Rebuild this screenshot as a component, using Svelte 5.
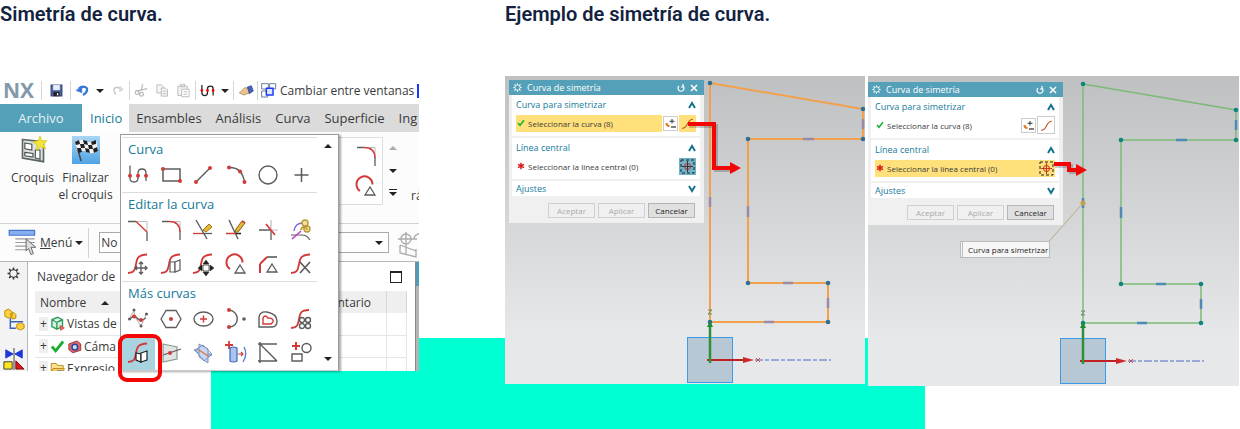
<script>
  const R = '#d23a3a', G = '#5c5c5c', K = '#222', L = '#bcbcbc', Y = '#e8b92c', B = '#5b7fd0';
  const S = 'M2 21C9 21 9 17 10 12C11 6 12 3 21 2.5';
  const dot = (x, y) => [`M${x} ${y}h.01`, R, 4];

  // each stroke: [path, stroke, width, fill]
  const spline = [['M4 2.5V15Q4 19 8 19T12 15V10Q12 6 16 6T20 10V18', G, 1.3], dot(4, 12.7), dot(12, 12.7), dot(20, 12.7)];
  const fillet = [['M11 3.5H21V13', L, 1], ['M3 3.5H10M21 13V22', G, 1.3], ['M10 3.5Q21 3.5 21 14', R, 1.4]];
  const arcTri = [['M6 17A8 8 0 1 1 18.500 10.500', R, 2], ['M16 13L21 21H11Z', G, 1.3, '#fff']];

  const sections = [
    { title: 'Curva', rows: [[
      { n: 'Perfil', p: spline },
      { n: 'Rectángulo', p: [['M4 6H21V18H4Z', G, 1.5], dot(4, 6), dot(21, 18)] },
      { n: 'Línea', p: [['M5 19L19 5', G, 1.4], dot(5, 19), dot(19, 5)] },
      { n: 'Arco', p: [['M5 4.500Q18 4 20.500 19', G, 1.4], dot(5, 4.5), dot(16, 8.5), dot(20.5, 19)] },
      { n: 'Círculo', p: [['M3 12A9 9 0 1 1 21 12A9 9 0 1 1 3 12', G, 1.4]] },
      { n: 'Punto', p: [['M12.500 5V19M5.500 12H19.500', G, 1.5]] }
    ]] },
    { title: 'Editar la curva', rows: [[
      { n: 'Chaflán', p: [['M10 3.500H21V14', L, 1], ['M2 3.500H10M21 14V23', G, 1.3], ['M10 3.500L21 14', R, 1.4]] },
      { n: 'Redondeo', p: fillet },
      { n: 'Recorte rápido', p: [['M5 2L16 21', G, 1.4], ['M2 15.500H11', R, 1.3], ['M11 15.500H21', G, 1.3], ['M12 12L18 6L21 9L15 14Z', '#9a7420', 1, Y]] },
      { n: 'Extensión rápida', p: [['M5 2L14 21', G, 1.4], ['M2 15.500H12', R, 1.5], ['M12 15.500H17', K, 1.5], ['M11 15L12 11L18 3L21 5L15 13Z', '#7a6530', 1, Y], ['M18 3L21 5', R, 2]] },
      { n: 'Esquina', p: [['M15 12V22M3 12H15', G, 1.3], ['M15 2V11M16 12H22', L, 1.2], ['M10 6L19 17', R, 1.7]] },
      { n: 'Editar parámetros', p: [['M5 13Q6 5 14 5', '#7a6bd0', 1.4], ['M2 17H13Q18 17 21 22', G, 1.2], ['M3 21L12 13', '#b44ac4', 1.6], ['M13 5A3 3 0 1 1 19 5A3 3 0 1 1 13 5M15 11A3 3 0 1 1 21 11A3 3 0 1 1 15 11M12 12A3 3 0 1 1 18 12', '#b99735', 1.4, '#f3e3a0']] }
    ], [
      { n: 'Mover curva', p: [[S, R, 1.8], ['M15 10V22M9 16H21M13 12L15 10L17 12M13 20L15 22L17 20M11 14L9 16L11 18M19 14L21 16L19 18', G, 1.3]] },
      { n: 'Desfasar curva', p: [[S, R, 1.8], ['M11 10H16V20H11Z', G, 1.2, '#fff'], ['M16 10L21 8V18L16 20Z', G, 1.2, '#fff']] },
      { n: 'Escalar curva', p: [[S, R, 1.8], ['M12 13H18V19H12Z', G, 1, '#fff'], ['M15 8L18 12H12ZM15 24L18 20H12ZM7 16L11 13V19ZM23 16L19 13V19Z', K, 0.5, K]] },
      { n: 'Cambiar radio', p: arcTri },
      { n: 'Cambiar chaflán', p: [['M4 21V12', R, 2], ['M4 12L11 5', R, 2], ['M11 5H21', G, 1.6], ['M16 12L21 20H11Z', G, 1.3]] },
      { n: 'Eliminar curva', p: [[S, R, 1.8], ['M11 10L21 21M21 10L11 21', G, 1.7]] }
    ]] },
    { title: 'Más curvas', rows: [[
      { n: 'Spline', p: [['M4 10L8 4L9 9M9 10L15 19L20 8', L, 1.2], ['M4 12Q8 7 11 11T20 11', G, 1.3], ['M8 3v.01M3.500 12h.01M15 19h.01M20.500 7h.01', G, 3], dot(8, 9.5), dot(15, 13)] },
      { n: 'Polígono', p: [['M2 12L7 3.500H17L22 12L17 20.500H7Z', G, 1.3], dot(12, 12)] },
      { n: 'Elipse', p: [['M3 12A9.500 7 0 1 1 22 12A9.500 7 0 1 1 3 12', G, 1.4], ['M12.500 8.500V15.500M9 12H16', R, 1.5]] },
      { n: 'Cónica', p: [['M5 3C16 4 16 20 5 20', G, 1.4], dot(5, 3), dot(5, 20), ['M20 12h.01', G, 3.6]] },
      { n: 'Curva de desfase', p: [['M3 20V10Q4 4 11 5Q21 7 21 14Q21 20 16 20Z', G, 1.4], ['M7 17V11Q9 7 12 11Q18 11 17 15L15 17Z', R, 1.4]] },
      { n: 'Curva de patrón', p: [['M2 21C9 21 9 17 10 12C11 6 12 3 20 3', R, 1.8], ['M10.500 13A2.500 2.500 0 1 1 15.500 13A2.500 2.500 0 1 1 10.500 13M16.500 13A2.500 2.500 0 1 1 21.500 13A2.500 2.500 0 1 1 16.500 13M10.500 19A2.500 2.500 0 1 1 15.500 19A2.500 2.500 0 1 1 10.500 19M16.500 19A2.500 2.500 0 1 1 21.500 19A2.500 2.500 0 1 1 16.500 19', G, 1.4, '#fff']] }
    ], [
      { n: 'Curva de simetría', active: true, p: [[S, R, 1.8], ['M10 12L15 13V21L10 19Z', K, 1.2, '#fff'], ['M15 12L21 10V19L15 21Z', K, 1.2, '#fff']] },
      { n: 'Punto de intersección', p: [['M4 3L18 6V18L4 21Z', '#8a9a90', 1.2, '#dfe5e2'], ['M4 14L22 8', G, 1.2], dot(11, 12)] },
      { n: 'Curva de intersección', p: [['M3 9L9 8L21 14L14 17Z', '#7c93bd', 1, '#b7c9ea'], ['M8 3L17 8V22L8 16Z', '#7c93bd', 1, '#c8d8f4'], ['M4 9L12 4L21 13L13 20Z', '#7c93bd', 1, 'none'], ['M8 9L17 15', '#e0763c', 1.4]] },
      { n: 'Proyectar curva', p: [['M5 0V8M1 4H9', R, 1.8], ['M6 7Q9.500 5 13 7V20Q9.500 22 6 20Z', '#3f68b8', 1.2, '#a9c4ee'], ['M14 13H19M17 11L19 13L17 15', R, 1.2], ['M20 6Q24 13 19 21', B, 1.4]] },
      { n: 'Curva derivada', p: [['M2 3H21M2 20H21M4 1V22M4 3L21 20', G, 1.4]] },
      { n: 'Añadir curvas', p: [['M7 1V9M3 5H11', R, 2], ['M13 7A4.500 4.500 0 1 1 22 7A4.500 4.500 0 1 1 13 7M3 13H13V20H3Z', G, 1.4]] }
    ]] }
  ];

  const undo = [['M5 8C10 3 20 4 19 10Q19 15 12 19', '#3878d8', 4], ['M10 4V15L0 11Z', '#3878d8', 1, '#3878d8']];
  const redo = [['M18 9C12 4 5 6 5 10Q5 15 9 18', '#c8c8c8', 2.5], ['M15 4L21 9L15 13Z', '#c8c8c8', 1, '#ddd']];
  const edit = [
    { n: 'Cortar', p: [['M14 2L11 13M4 13L21 9', '#bbb', 2], ['M2 15A3 3 0 1 1 8 15A3 3 0 1 1 2 15M9 18A3 3 0 1 1 15 18A3 3 0 1 1 9 18', '#bbb', 2]] },
    { n: 'Copiar', p: [['M3 3H10L13 6V16H3Z', '#bbb', 1.5, '#f6f6f6'], ['M10 8H17L20 11V21H10ZM12 13H18M12 17H18', '#bbb', 1.5, '#f6f6f6']] },
    { n: 'Pegar', p: [['M3 5H18V20H3ZM7 2H14V6H7Z', '#bbb', 1.5, '#f3f3f3'], ['M9 10H21V22H9ZM12 14H18M12 18H18', '#bbb', 1.5, '#fff']] }
  ];
  const save = [['M2 2H22V22H2Z', '#34447c', 2, '#4a5fa0'], ['M6 2H18V11H6Z', '#dfe6f6', 1, '#e8eefa'], ['M7 15H17V22H7Z', '#222', 1, '#222'], ['M14 17V21', '#fff', 2.5]];
  const curveTool = [['M3 3V15Q3 20 7.500 20T12 15V9Q12 5 16.500 5T21 9V20', '#222', 2], ['M3 12h.01M12 12h.01M21 12h.01', '#e00', 4.5]];
  const brush = [['M2 15L10 7L18 8L17 15L9 18Z', '#a67c48', 1, '#e9c48e'], ['M14 6L20 4L23 12L17 16Z', '#27408c', 1, '#4660b8']];
  const windows = [['M1 1H11V9H1ZM13 1H22V9H13ZM1 12H10V21H1Z', '#6b7f9a', 1.5, '#fff'], ['M8 8H18V18H8Z', '#1c38ff', 2.2, '#dfe6ff']];

  const croquis = [['M3 3L21 5V22L3 19Z', '#5a6660', 1.4, '#dfe3df'], ['M5 6L11 7V12L5 11ZM5 14L12 15V18L5 17ZM14 12L18 12V20L14 19Z', '#49524d', 1, '#fff'], ['M18 0L19.500 4L24 4L21 7L23 11L18.500 9L15 12L15.500 7.500L12 5L16.500 4Z', '#d8c400', 0.6, '#f2e53c']];
  const menuIcon = [['M6 9H22M6 12H22M6 15H22M6 18H15', '#9a9a9a', 1], ['M1 2H22V6H1Z', '#4a78c8', 1, '#86aef0'], ['M15 9L23 16H19L21 21L19 22L17 17L15 19Z', '#666', 0.8, '#ddd']];
  const gear = [['M12 1V5M12 19V23M1 12H5M19 12H23M4 4L7 7M17 17L20 20M20 4L17 7M7 17L4 20', '#333', 3], ['M5 12A7 7 0 1 1 19 12A7 7 0 1 1 5 12', '#333', 2]];
  const parts = [['M8 10V21H14M8 14H22', '#3a60b8', 1.6], ['M2 2L6 0L10 3V8L6 10L2 8ZM8 5L12 4L14 6V10L10 11ZM15 17L19 15L23 17V21L19 23L15 21Z', '#b8860b', 1, '#ffd23c']];
  const mirror = [['M12 0V24', '#333', 1], ['M3 2V11L11 6.500Z', '#1c38d8', 1, '#1c38d8'], ['M21 2V11L13 6.500Z', '#1c38d8', 1, '#1c38d8'], ['M1 15H10V23H1Z', '#333', 1, '#ffe61c'], ['M14 14V23H23Z', '#800', 1, '#d81c1c']];
  const cube = [['M3 6L12 2L20 6V17L11 21L3 17ZM3 6L11 10L20 6M11 10V21', '#2e9a5c', 2.2, '#d2f3dd'], ['M16 15L23 19L17 23Z', '#c33', 1, '#e66']];
  const check = [['M3 12L9 19L21 4', '#18b030', 4.5]];
  const camera = [['M3 8L16 3L22 8V18L9 22L3 17Z', '#9a3030', 1.5, '#d66'], ['M8 13A4.500 4.500 0 1 1 17 13A4.500 4.500 0 1 1 8 13', '#2c4a9a', 2.5, '#c8dcff']];
  const folder = [['M2 4H10L12 7H21V20H2Z', '#b88a1c', 1.5, '#ffe08a'], ['M5 12H23L20 20H2Z', '#b88a1c', 1.5, '#ffd050'], ['M11 16H20', '#3860c0', 2]];
  const csys = [['M9 1V23M1 8H20M3 14L19 20M3 14V22L19 26V18', '#aaa', 1.3], ['M4 8A5 5 0 1 1 14 8A5 5 0 1 1 4 8M17 8A5 5 0 1 1 27 8', '#aaa', 1.3]];
  const addCurve = [['M14 4V13M9 8.500H19', '#333', 2], ['M3 12Q3 18 9 18', '#e07a20', 4], ['M12 20H22', '#333', 2.5]];
  const sCurve = [['M2 21C14 21 10 4 22 4', '#c8501c', 2]];
  const axisIcon = [['M2 22V2H22', '#222', 2, 'none'], ['M7 13A6 6 0 1 1 19 13A6 6 0 1 1 7 13M3 13H23M13 4V22', '#c02020', 1.8]];
  const star = [['M12 2V22M3 7L21 17M21 7L3 17', '#d81c1c', 4.5]];

  const tree = [
    { t: 'Vistas de', icons: [cube] },
    { t: 'Cáma', icons: [check, camera] },
    { t: 'Expresio', icons: [folder] }
  ];
  const tabs = ['Ensambles', 'Análisis', 'Curva', 'Superficie', 'Ing'];
  const corners = [[0, 0], [153, 26], [153, 56], [38, 56], [38, 200], [118, 200], [118, 239], [0, 239]];
</script>

{#snippet icon(strokes, size = 24)}
  <svg class="icon" width={size} height={size} viewBox="0 0 24 24" aria-hidden="true">
    {#each strokes as [d, stroke, width, fill]}
      <path {d} {stroke} stroke-width={width} fill={fill ?? 'none'} stroke-linecap={d.includes('.01') ? 'round' : 'butt'} />
    {/each}
  </svg>
{/snippet}

{#snippet chevron(up)}
  <svg class="icon" width="8" height="8" viewBox="0 0 8 8" aria-hidden="true">
    <path d={up ? 'M1 7L4 2L7 7' : 'M1 1L4 6L7 1'} fill="none" stroke="#16738f" stroke-width="2" />
  </svg>
{/snippet}

{#snippet drawing(line, node, tick, width)}
  <polygon points={corners.map((c) => c.join()).join(' ')} fill="none" stroke={line} stroke-width={width} />
  <path d="M153 41v-5v10M93 56h11M0 114v10M38 123v11M73 200h10M118 215v10M54 239h10" fill="none" stroke={tick} stroke-width="2.500" />
  {#each corners as [x, y]}
    <circle cx={x} cy={y} r="2.300" fill={node} />
  {/each}
  <rect x="-22.500" y="254.500" width="45" height="45" fill="#8fabc288" stroke="#3b9be8" />
  <path d="M45 277H121" stroke="#7d92d4" stroke-width="1.500" stroke-dasharray="8 2 4 2" />
  <path d="M-3 277H36" stroke="#c02020" stroke-width="2" />
  <path d="M33 274L44 277L33 280Z" fill="#c92a2a" />
  <path d="M0 280V243" stroke="#2f8f3a" stroke-width="2.500" />
  <path d="M-3 244L0 238L3 244Z" fill="#1f8a30" />
  <path d="M46 275L50 279M50 275L46 279" stroke="#d04848" />
  <path d="M-2 227H2L-2 231H2" fill="none" stroke="#6d8d5a" />
{/snippet}

{#snippet dialog(second)}
  <section class="dialog" class:second>
    <header>
      {@render icon(gear.map(([d, , w]) => [d, '#fff', w]), 9)}
      <span>Curva de simetría</span>
      <button aria-label="Restablecer"><svg width="8" height="8" viewBox="0 0 8 8"><path d="M2 2A3 3 0 1 0 6 2M6 0V3H4" fill="none" stroke="#fff" stroke-width="1.200" /></svg></button>
      <button aria-label="Cerrar"><svg width="8" height="8" viewBox="0 0 8 8"><path d="M1 1L7 7M7 1L1 7" stroke="#fff" stroke-width="1.500" /></svg></button>
    </header>
    <div class="group">
      <h3>Curva para simetrizar {@render chevron(true)}</h3>
      <div class="pick" class:on={!second}>
        <span class="label">{@render icon(check, 8)} Seleccionar la curva (8)</span>
        <button class="boxed" aria-label="Añadir curva">{@render icon(addCurve, 12)}</button>
        <button class="tool" class:boxed={second} aria-label="Curva">{@render icon(sCurve, 13)}</button>
      </div>
    </div>
    <div class="group">
      <h3>Línea central {@render chevron(true)}</h3>
      <div class="pick joined" class:on={second}>
        <span class="label">{@render icon(star, 8)} Seleccionar la línea central (0)</span>
        <button class="tool axis" aria-label="Línea central">
          <svg class="icon" width="15" height="15" viewBox="0 0 15 15" aria-hidden="true">
            <rect x="1" y="1" width="13" height="13" fill="none" stroke="#222" stroke-dasharray="3 2" />
            <path d="M7.500 2V13M2 7.500H13" stroke={second ? '#c83c1c' : '#333'} />
            <circle cx="7.500" cy="7.500" r="3" fill="none" stroke="#c82828" />
          </svg>
        </button>
      </div>
    </div>
    <div class="group closed">
      <h3>Ajustes {@render chevron(false)}</h3>
    </div>
    <footer>
      <button disabled>Aceptar</button>
      <button disabled>Aplicar</button>
      <button>Cancelar</button>
    </footer>
  </section>
{/snippet}

<main>
  <div class="band"></div>
  <article>
    <h2>Simetría de curva.</h2>
    <div class="app">
      <div class="window">
        <div class="quick">
          <strong>NX</strong>
          <i></i>
          <button class="wide" aria-label="Guardar">{@render icon(save, 13)}</button>
          <i></i>
          <button aria-label="Deshacer">{@render icon(undo, 14)}</button>
          <span class="caret"></span>
          <button aria-label="Rehacer">{@render icon(redo, 14)}</button>
          <i></i>
          {#each edit as q}<button aria-label={q.n}>{@render icon(q.p, 15)}</button>{/each}
          <i></i>
          <button aria-label="Perfil">{@render icon(curveTool, 15)}</button>
          <span class="caret"></span>
          <i></i>
          <button aria-label="Formato">{@render icon(brush, 16)}</button>
          <i></i>
          <button class="switch">{@render icon(windows, 16)} Cambiar entre ventanas</button>
          <span class="frame"></span>
        </div>
        <nav>
          <button class="file">Archivo</button>
          <button class="current">Inicio</button>
          {#each tabs as t}<button>{t}</button>{/each}
        </nav>
        <div class="ribbon">
          <button>{@render icon(croquis, 28)}<span>Croquis</span></button>
          <button>
            <svg class="icon" width="28" height="28" viewBox="0 0 28 28" aria-hidden="true">
              <defs><linearGradient id="sky" x2="0" y2="1"><stop stop-color="#a9d5f5" /><stop offset="1" stop-color="#4fa3e3" /></linearGradient></defs>
              <rect width="28" height="28" fill="url(#sky)" />
              <path d="M4 6L9 25" stroke="#444" stroke-width="1.500" />
              <path d="M3 6Q8 2 13 5T24 4L26 15Q20 19 15 16T6 17Z" fill="#f4f4f4" />
              <path d="M3 6L7 4L8 8L4 9ZM11 4L15 5L16 9L12 8ZM19 6L24 4L24 8L20 9ZM8 8L12 8L13 12L9 12ZM16 9L20 9L21 13L17 13ZM5 12L9 12L10 16L6 17ZM13 12L17 13L18 17L14 16ZM21 13L25 11L26 15L22 17Z" fill="#222" />
            </svg>
            <span>Finalizar<br />el croquis</span>
          </button>
          <div class="gallery">
            {@render icon(fillet, 24)}
            {@render icon(arcTri, 24)}
          </div>
          <div class="arrows"><span class="caret up pale"></span><span class="caret"></span><span class="caret line"></span></div>
          <span class="more">rá</span>
        </div>
        <div class="menubar">
          <button>{@render icon(menuIcon, 29)}<span><u>M</u>enú</span><span class="caret"></span></button>
          <i></i>
          <div class="combo">
            <select aria-label="Filtro de selección"><option>No</option></select>
            <span class="caret"></span>
          </div>
          {@render icon(csys, 24)}
        </div>
        <div class="body">
          <aside>
            {@render icon(gear, 13)}
            {@render icon(parts, 22)}
            {@render icon(mirror, 22)}
          </aside>
          <section class="navigator">
            <h3>Navegador de <span class="restore"></span></h3>
            <table>
              <thead><tr><th>Nombre <span class="caret up"></span></th><th class="info">ntario</th><th class="end"></th></tr></thead>
              <tbody>
                {#each tree as row}
                  <tr>
                    <td><div class="node"><span class="plus">+</span>{#each row.icons as ic}{@render icon(ic, 15)}{/each}<span>{row.t}</span></div></td>
                    <td></td><td></td>
                  </tr>
                {/each}
              </tbody>
            </table>
          </section>
          <div class="edge"></div>
        </div>
      </div>
      <div class="menu">
        <div class="sections">
          {#each sections as s}
            <section>
              <h3>{s.title}</h3>
              {#each s.rows as row}
                <div class="row">
                  {#each row as item}
                    <button class:active={item.active} aria-label={item.n}>{@render icon(item.p, 24)}</button>
                  {/each}
                </div>
              {/each}
            </section>
          {/each}
        </div>
        <div class="scroll"><span class="caret up"></span><span class="caret"></span></div>
      </div>
    </div>
  </article>

  <article>
    <h2>Ejemplo de simetría de curva.</h2>
    <div class="examples">
      <div class="canvas">
        <svg class="scene" viewBox="0 0 360 308" aria-hidden="true">
          <g transform="translate(205 7)">{@render drawing('#f3a04c', '#2f6f94', '#9d8ba6', 2)}</g>
        </svg>
        {@render dialog(false)}
        <svg class="pointer" width="60" height="60" viewBox="0 0 60 60" aria-hidden="true">
          <path d="M3 5H30V49H49" fill="none" stroke="#0003" stroke-width="4" transform="translate(0 1)" />
          <path d="M2 4H28V48H46" fill="none" stroke="#f40606" stroke-width="4" />
          <path d="M44 42L55 48L44 54Z" fill="#f40606" />
        </svg>
      </div>
      <div class="canvas">
        <svg class="scene" viewBox="0 0 371 310" aria-hidden="true">
          <g transform="translate(215 8)">
            {@render drawing('#7dba78', '#10857f', '#4d8bb5', 1.5)}
            <path d="M0 119L-38 162" stroke="#b9a987" />
            <circle cx="0" cy="119" r="2.500" fill="#c2a14e" />
          </g>
        </svg>
        {@render dialog(true)}
        <svg class="pointer short" width="40" height="20" viewBox="0 0 40 20" aria-hidden="true">
          <path d="M3 6H19V12H29" fill="none" stroke="#0003" stroke-width="4" transform="translate(0 1)" />
          <path d="M2 5H17V11H26" fill="none" stroke="#f40606" stroke-width="4" />
          <path d="M24 5L35 11L24 17Z" fill="#f40606" />
        </svg>
        <div class="tip">Curva para simetrizar</div>
      </div>
    </div>
  </article>
</main>

<style>
  :global(body) { background: #fff; }
  * { box-sizing: border-box; }
  main {
    position: relative;
    display: grid;
    grid-template-columns: minmax(0, 419fr) minmax(0, 735fr);
    gap: 86px;
    padding-bottom: 43px;
    font-family: "Open Sans", "Noto Sans", sans-serif;
    font-size: 12px;
    color: #3a3a3a;
  }
  .band { position: absolute; left: 17%; right: 25.4%; bottom: 0; height: 91px; background: #00ffd2; }
  article { position: relative; }
  h2 { margin: 0; height: 76px; padding-top: 2px; font: 600 20px/24px Roboto, sans-serif; color: #13233f; white-space: nowrap; }
  h3 { margin: 0; font-weight: 400; }
  button { font: inherit; color: inherit; background: none; border: 0; padding: 0; margin: 0; white-space: nowrap; display: inline-flex; align-items: center; justify-content: center; }
  .icon { display: block; flex: none; overflow: visible; }
  .caret { flex: none; width: 0; height: 0; border: 4px solid transparent; border-top-color: #222; border-bottom: 0; }
  .caret.up { border-top: 0; border-bottom: 4px solid #222; }
  .caret.pale { border-bottom-color: #aaa; }

  .app { position: relative; padding-top: 4px; }
  .window { overflow: hidden; height: 291px; background: #fcfcfc; }
  .quick { display: flex; align-items: center; height: 24px; background: #fff; padding-bottom: 3px; }
  .quick strong { flex: none; width: 40px; padding-left: 3px; font-size: 21px; line-height: 21px; color: #8299ab; }
  .quick i { flex: none; width: 1px; height: 19px; margin: 0 1px; background: #d5d5d5; }
  .quick button { flex: none; width: 21px; height: 20px; }
  .quick .wide { width: 26px; }
  .quick .caret { margin: 0 3px; }
  .quick .switch { width: auto; gap: 3px; padding-left: 2px; }
  .frame { flex: none; width: 14px; height: 14px; margin-left: 3px; border: 2px solid #1c38ff; }

  nav { display: flex; height: 28px; background: #dbdbdb; overflow: hidden; font-size: 13px; }
  nav button { flex: none; padding: 0 7px; }
  nav .file { width: 82px; background: #54a0b8; color: #e4f1f5; }
  nav .current { background: #fff; color: #157a9c; border-left: 1px solid #fff; }

  .ribbon { display: flex; height: 92px; padding: 4px 0 0 6px; border-bottom: 1px solid #d2d2d2; line-height: 17px; }
  .ribbon button { flex: none; flex-direction: column; justify-content: flex-start; gap: 5px; width: 53px; }
  .gallery { display: flex; flex-direction: column; align-items: flex-end; justify-content: space-evenly; flex: none; width: 60px; height: 68px; margin: 1px 0 0 auto; padding-right: 4px; border: 1px solid #ddd; background: #fff; }
  .arrows { display: flex; flex-direction: column; justify-content: space-between; height: 50px; margin: 10px 14px 0 6px; }
  .caret.line { position: relative; }
  .caret.line::before { content: ""; position: absolute; left: -4px; top: -7px; width: 8px; height: 1px; background: #222; }
  .more { align-self: flex-end; width: 8px; padding-bottom: 19px; }

  .menubar { display: flex; align-items: center; height: 38px; padding: 0 0 0 8px; border-bottom: 1px solid #b5b9bd; }
  .menubar button { gap: 3px; }
  .menubar i { width: 1px; height: 30px; margin: 0 10px 0 5px; background: #d2d2d2; }
  .combo { display: flex; align-items: center; flex: 1; height: 21px; margin-right: 8px; padding-right: 5px; border: 1px solid #aaa; background: #fff; }
  .combo select { flex: 1; appearance: none; border: 0; background: none; font: inherit; color: inherit; padding: 0 1px; }
  .menubar > .icon { margin-right: -2px; }

  .body { display: flex; height: 109px; }
  aside { display: flex; flex-direction: column; align-items: center; gap: 24px; flex: none; width: 28px; padding-top: 5px; background: #f3f3f3; border-right: 1px solid #b5b9bd; }
  aside .icon + .icon { margin-top: 5px; }
  aside .icon + .icon + .icon { margin-top: -7px; }
  .navigator { flex: 1; padding: 0 8px 0 7px; background: #fff; }
  .navigator h3 { display: flex; align-items: center; justify-content: space-between; height: 29px; padding: 0 5px 0 2px; font-size: 12px; }
  .restore { width: 12px; height: 12px; border: 1px solid #222; border-top-width: 2px; }
  table { width: 100%; border-collapse: collapse; table-layout: fixed; }
  th { height: 22px; padding: 0; font-weight: 400; text-align: left; background: #efefef; border-right: 1px solid #d8d8d8; }
  th:first-child { padding-left: 5px; border-right: 0; }
  th .caret { display: inline-block; margin: 0 0 2px 12px; }
  .info { width: 49px; }
  .end { width: 20px; }
  td { height: 22px; padding: 0; border-bottom: 1px solid #e6e6e6; border-right: 1px solid #e6e6e6; }
  .node { display: flex; align-items: center; gap: 2px; height: 21px; padding-left: 4px; white-space: nowrap; }
  .plus { width: 9px; line-height: 14px; text-align: center; background: #eee; }
  .edge { width: 4px; background: linear-gradient(#4f9cb6 24px, #b5b5b5 24px); border-left: 1px solid #8a8a8a; }

  .menu { position: absolute; top: 58px; left: 120px; display: flex; width: 219px; padding: 2px 0 0 1px; background: #fff; border: 1px solid #9c9c9c; border-bottom-color: #ccc; box-shadow: 2px 1px 2px #0005; }
  .sections { width: 195px; }
  .menu section { border-top: 1px solid #dcdcdc; }
  .menu h3 { height: 20px; padding-left: 6px; font-size: 13px; line-height: 22px; color: #157a9c; }
  .row { display: grid; grid-template-columns: repeat(6, 1fr); height: 34px; }
  .row button { position: relative; }
  .active { background: #a9d3df; }
  .active::after { content: ""; position: absolute; inset: -2px -7px -12px -4px; border: 4px solid #f40606; border-radius: 9px; }
  .scroll { flex: 1; display: flex; flex-direction: column; align-items: center; justify-content: space-between; padding: 7px 0 9px; }

  .examples { display: grid; grid-template-columns: minmax(0, 360fr) minmax(0, 371fr); gap: 3px; align-items: start; padding-right: 1px; background: linear-gradient(#fff, #fff) top / 100% 262px no-repeat; }
  .canvas { position: relative; background: linear-gradient(#bfc0c2, #d4d5d7 45%, #e6e8ea 85%); }
  .scene { display: block; width: 100%; }
  .dialog { position: absolute; left: 4px; top: 4px; width: 195px; background: #f0f0f0; font-size: 8px; }
  .dialog.second { left: 0; top: 6px; }
  .dialog header { display: flex; align-items: center; gap: 5px; height: 15px; padding: 0 6px 0 4px; background: #54a0b8; color: #fff; font-size: 9px; }
  .dialog header span { flex: 1; }
  .group { height: 41px; margin: 0 4px 2px 3px; padding: 2px 4px 0 4px; background: #fff; }
  .group.closed { height: 15px; padding-top: 0; }
  .group h3 { display: flex; align-items: center; justify-content: space-between; height: 15px; font-size: 9px; color: #157a9c; }
  .pick { display: flex; align-items: center; gap: 1px; height: 18px; margin-top: 2px; }
  .joined { gap: 0; }
  .label { display: flex; align-items: center; gap: 3px; flex: 1; height: 17px; padding-left: 1px; white-space: nowrap; }
  .axis { background: #6fb3c9; }
  .on .label, .on .tool { background: #ffe07a; }
  .pick button { width: 17px; height: 17px; }
  .pick .boxed { width: 15px; height: 15px; background: #fff; border: 1px solid #ccc; }
  .pick .tool.boxed { width: 18px; height: 18px; }
  .dialog footer { display: flex; justify-content: flex-end; gap: 3px; padding: 5px 9px 5px 0; }
  .dialog footer button { width: 47px; height: 15px; border: 1px solid #b5b5b5; background: #e0e0e0; color: #222; }
  .dialog footer button:disabled { background: #f0f0f0; border-color: #d0d0d0; color: #aaa; }
  .pointer { position: absolute; left: 181px; top: 44px; }
  .pointer.short { left: 184px; top: 83px; }
  .tip { position: absolute; left: 92px; top: 165px; padding: 0 1px 0 5px; border: 1px solid #bbb; border-left: 3px double #bbb; background: #f6f6f6; color: #222; font-size: 8px; line-height: 15px; white-space: nowrap; }
</style>
